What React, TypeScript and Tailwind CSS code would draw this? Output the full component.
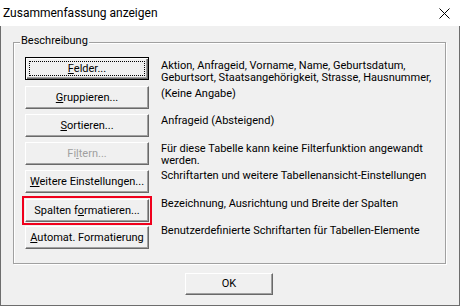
import type { ReactNode } from "react";

/**
 * Classic Win32 push button
 */
function DlgButton({
  children,
  isDefault,
  disabled,
  className = "",
}: {
  children: ReactNode;
  isDefault?: boolean;
  disabled?: boolean;
  className?: string;
}) {
  const frame = isDefault
    ? "border border-black shadow-[inset_1px_1px_0_#fff,inset_-1px_-1px_0_#696969,inset_-2px_-2px_0_#a0a0a0]"
    : "border border-t-white border-l-white border-r-[#696969] border-b-[#696969] shadow-[inset_-1px_-1px_0_#a0a0a0]";

  return (
    <div
      className={`relative flex items-center justify-center bg-[#f0f0f0] leading-[12px] ${frame} ${
        disabled ? "text-[#a0a0a0]" : "text-black"
      } ${className}`}
    >
      {isDefault && <div className="absolute inset-[3px] border border-dotted border-black" />}
      <span>{children}</span>
    </div>
  );
}

export default function App() {
  return (
    <div className="w-[460px] h-[306px] bg-[#f0f0f0] flex flex-col font-['Roboto',sans-serif] text-[11px] text-black">
      {/* Title bar */}
      <div className="h-[26px] bg-white flex items-center justify-between pl-[3px] pr-[10px]">
        <span className="text-[12px]">Zusammenfassung anzeigen</span>
        <svg width="11" height="11" viewBox="0 0 11 11">
          <path d="M0.5 0.5 L10.5 10.5 M10.5 0.5 L0.5 10.5" stroke="#000" strokeWidth="1" />
        </svg>
      </div>

      {/* Body */}
      <div className="flex-1 flex flex-col border-x border-b border-[#6d6d6d]">
        {/* Group box */}
        <div className="relative ml-[12px] mt-[16px] w-[433px] h-[222px] border border-[#a0a0a0] shadow-[inset_1px_1px_0_#fff,1px_1px_0_#fff]">
          <span className="absolute -top-[8px] left-[6px] px-[1px] bg-[#f0f0f0] leading-[12px]">
            Beschreibung
          </span>

          <div className="flex pl-[11px]">
            {/* Buttons */}
            <div className="flex flex-col pt-[14px] w-[124px]">
              <DlgButton isDefault className="h-[23px]">
                <u>F</u>elder...
              </DlgButton>
              <DlgButton className="h-[23px] mt-[6px]">
                <u>G</u>ruppieren...
              </DlgButton>
              <DlgButton className="h-[23px] mt-[5px]">
                <u>S</u>ortieren...
              </DlgButton>
              <DlgButton disabled className="h-[23px] mt-[5px]">
                Fi<u>l</u>tern...
              </DlgButton>
              <DlgButton className="h-[23px] mt-[5px]">
                <u>W</u>eitere Einstellungen...
              </DlgButton>
              <div className="relative mt-[6px]">
                <DlgButton className="h-[23px]">
                  Spalten f<u>o</u>rmatieren...
                </DlgButton>
                {/* highlight annotation */}
                <div className="absolute -inset-[3px] border-2 border-[#f0001c]" />
              </div>
              <DlgButton className="h-[23px] mt-[4px]">
                <u>A</u>utomat. Formatierung
              </DlgButton>
            </div>

            {/* Descriptions */}
            <div className="flex flex-col pt-[17px] ml-[12px] leading-[12px]">
              <p>
                Aktion, Anfrageid, Vorname, Name, Geburtsdatum,
                <br />
                Geburtsort, Staatsangehörigkeit, Strasse, Hausnummer,
              </p>
              <p className="mt-[4px]">(Keine Angabe)</p>
              <p className="mt-[15px]">Anfrageid (Absteigend)</p>
              <p className="mt-[16px]">
                Für diese Tabelle kann keine Filterfunktion angewandt
                <br />
                werden.
              </p>
              <p className="mt-[3px]">Schriftarten und weitere Tabellenansicht-Einstellungen</p>
              <p className="mt-[16px]">Bezeichnung, Ausrichtung und Breite der Spalten</p>
              <p className="mt-[15px]">Benutzerdefinierte Schriftarten für Tabellen-Elemente</p>
            </div>
          </div>
        </div>

        {/* OK */}
        <DlgButton className="ml-[184px] mt-[9px] w-[88px] h-[22px]">OK</DlgButton>
      </div>
    </div>
  );
}
